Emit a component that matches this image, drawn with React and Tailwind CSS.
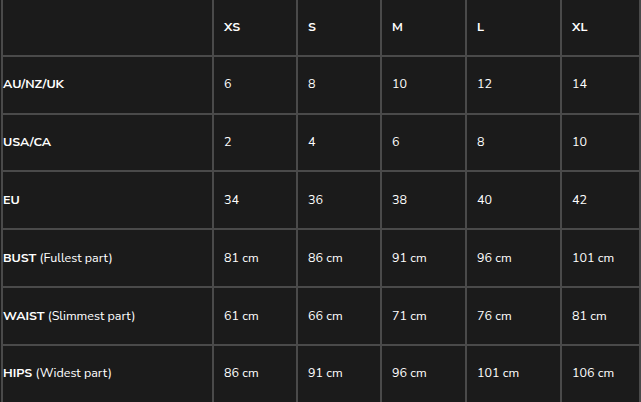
import { Fragment } from 'react';

const sizes = ['XS', 'S', 'M', 'L', 'XL'];

const rows = [
    { label: 'AU/NZ/UK', values: ['6', '8', '10', '12', '14'] },
    { label: 'USA/CA', values: ['2', '4', '6', '8', '10'] },
    { label: 'EU', values: ['34', '36', '38', '40', '42'] },
    { label: 'BUST', note: '(Fullest part)', values: ['81 cm', '86 cm', '91 cm', '96 cm', '101 cm'] },
    { label: 'WAIST', note: '(Slimmest part)', values: ['61 cm', '66 cm', '71 cm', '76 cm', '81 cm'] },
    { label: 'HIPS', note: '(Widest part)', values: ['86 cm', '91 cm', '96 cm', '101 cm', '106 cm'] },
];

function Cell({ children, first }) {
    return (
        <div className={`h-[55.8px] bg-[#1b1b1b] flex items-center text-white ${first ? 'pl-0' : 'pl-[10px]'}`}>
            {children}
        </div>
    );
}

export default function App() {
    return (
        <div className="w-[641px] h-[402px] overflow-hidden bg-[#1b1b1b]">
            <div
                className="ml-px -mt-[3px] grid grid-cols-[209px_82px_82px_83px_93px_77px] gap-[2px] p-[2px] bg-[#4a4a4a] text-[12.5px] leading-none"
                style={{ fontFamily: '"Nunito Sans", Lato, "Noto Sans", sans-serif' }}
            >
                {/* header row */}
                <Cell first />
                {sizes.map((s) => (
                    <Cell key={s}>
                        <span className="font-bold">{s}</span>
                    </Cell>
                ))}

                {rows.map((row) => (
                    <Fragment key={row.label}>
                        <Cell first>
                            <span>
                                <span className="font-bold">{row.label}</span>
                                {row.note && <span> {row.note}</span>}
                            </span>
                        </Cell>
                        {row.values.map((v, i) => (
                            <Cell key={i}>{v}</Cell>
                        ))}
                    </Fragment>
                ))}
            </div>
        </div>
    );
}
